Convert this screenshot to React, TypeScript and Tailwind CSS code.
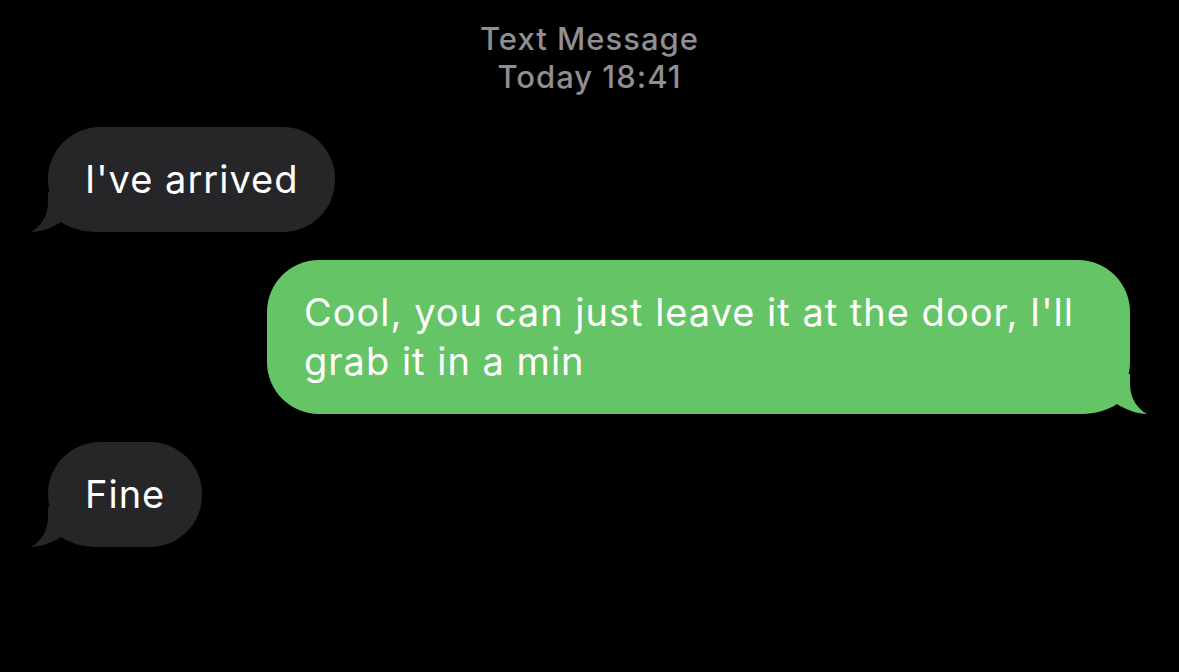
import React from 'react';

type Side = 'in' | 'out';

interface Message {
  id: number;
  side: Side;
  text: string;
}

const messages: Message[] = [
  { id: 1, side: 'in', text: "I've arrived" },
  { id: 2, side: 'out', text: "Cool, you can just leave it at the door, I'll grab it in a min" },
  { id: 3, side: 'in', text: 'Fine' },
];

function Tail({ side, color }: { side: Side; color: string }) {
  // bubble curl drawn at the bottom corner
  if (side === 'in') {
    return (
      <svg
        className="absolute left-[-20px] bottom-0"
        width="70"
        height="40"
        viewBox="0 0 70 40"
      >
        <path
          d="M20 0 L20 10 C20 25 12 35 3 40 C12 40 24 36 33 30 C42 36 54 40 70 40 L70 0 Z"
          fill={color}
        />
      </svg>
    );
  }
  return (
    <svg
      className="absolute right-[-20px] bottom-0"
      width="70"
      height="40"
      viewBox="0 0 70 40"
    >
      <path
        d="M50 0 L50 10 C50 25 58 35 67 40 C58 40 46 36 37 30 C28 36 16 40 0 40 L0 0 Z"
        fill={color}
      />
    </svg>
  );
}

function Bubble({ side, text }: { side: Side; text: string }) {
  const isOut = side === 'out';
  return (
    <div className={`flex ${isOut ? 'justify-end pr-[49px]' : 'justify-start pl-[48px]'}`}>
      <div
        className={`relative rounded-[52px] px-[37px] py-[28px] text-[38px] leading-[49px] tracking-[1px] text-white ${
          isOut ? 'bg-[#65c466] w-[863px]' : 'bg-[#262628]'
        }`}
      >
        <Tail side={side} color={isOut ? '#65c466' : '#262628'} />
        <span className="relative">{text}</span>
      </div>
    </div>
  );
}

export default function App() {
  return (
    <div
      className="w-[1179px] h-[672px] bg-black overflow-hidden"
      style={{ fontFamily: 'Inter, "Noto Sans", sans-serif' }}
    >
      <div className="pt-[20px] text-center text-[#8e8e93] text-[31px] leading-[38px] font-medium tracking-[1px]">
        <div>Text Message</div>
        <div>Today 18:41</div>
      </div>

      <div className="mt-[31px] flex flex-col gap-[28px]">
        {messages.map(m => (
          <Bubble key={m.id} side={m.side} text={m.text} />
        ))}
      </div>
    </div>
  );
}
